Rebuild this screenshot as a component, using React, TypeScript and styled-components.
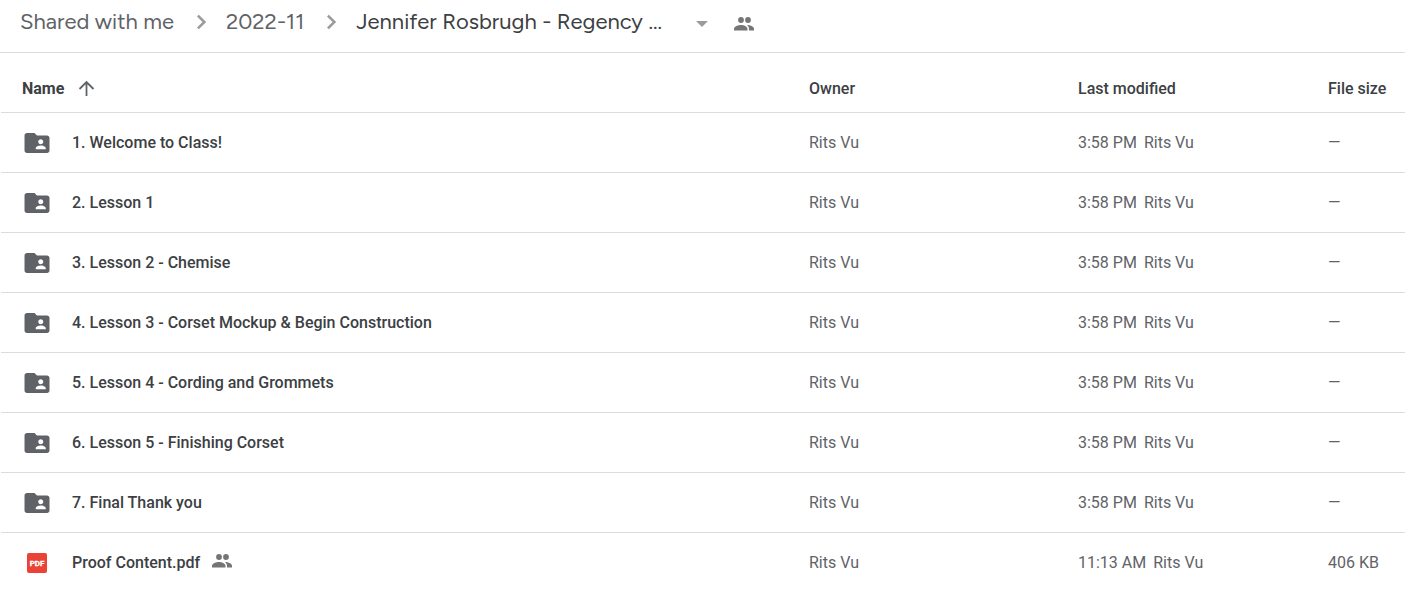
import React from "react";
import styled, { createGlobalStyle } from "styled-components";

const GlobalStyle = createGlobalStyle`
  *, *::before, *::after { box-sizing: border-box; }
  body {
    margin: 0;
    background: #fff;
    color: #3c4043;
    font-family: Roboto, "Liberation Sans", sans-serif;
    font-size: 16px;
    line-height: 20px;
  }
`;

const Breadcrumbs = styled.nav`
  display: flex;
  align-items: center;
  height: 53px;
  padding: 0 20px 8px;
  border-bottom: 1px solid #dadce0;
  font-family: Figtree, Inter, "Liberation Sans", sans-serif;
  font-size: 22px;
  line-height: 28px;
  white-space: nowrap;
`;

const Crumb = styled.a<{ $current?: boolean }>`
  color: ${(p) => (p.$current ? "#3c4043" : "#5f6368")};
  font-weight: 400;
  text-decoration: none;
`;

const Separator = styled.svg`
  flex: none;
  width: 52px;
  height: 28px;
  fill: #999b9e;
`;

const IconButton = styled.button<{ $width: number; $gap: number }>`
  display: flex;
  justify-content: center;
  width: ${(p) => p.$width}px;
  margin-left: ${(p) => p.$gap}px;
  padding: 4px 0 0;
  border: 0;
  background: none;
  color: #757575;
`;

const FileTable = styled.table`
  width: calc(100% - 1px);
  margin-left: 1px;
  border-collapse: separate;
  border-spacing: 0;
  table-layout: fixed;
`;

const Column = styled.col<{ $width?: number }>`
  width: ${(p) => (p.$width ? `${p.$width}px` : "auto")};
`;

const HeaderCell = styled.th`
  height: 60px;
  padding: 12px 0 0;
  border-bottom: 1px solid #dadce0;
  font-weight: 500;
  text-align: left;
  white-space: nowrap;

  &:first-child { padding-left: 21px; }
`;

const SortButton = styled.button`
  display: flex;
  align-items: center;
  gap: 12px;
  padding: 0;
  border: 0;
  background: none;
  color: inherit;
  font: inherit;
  font-weight: 700;
`;

const Row = styled.tr`
  height: 60px;

  & > * { border-bottom: 1px solid #dadce0; }
  &:last-child > * { border-bottom-color: transparent; }
`;

const Cell = styled.td`
  padding: 0;
  color: #5f6368;
  white-space: nowrap;
`;

const NameCell = styled.th`
  padding: 1px 0 0 21px;
  font-weight: 500;
  text-align: left;
`;

const FileName = styled.span`
  display: flex;
  align-items: center;
`;

const IconSlot = styled.span`
  display: flex;
  justify-content: center;
  width: 30px;
  margin-right: 20px;
`;

const SharedMark = styled.span`
  display: flex;
  margin-left: 12px;
  padding-bottom: 4px;
  color: #757575;
`;

const Editor = styled.span`
  margin-left: 7px;
`;

const FolderIcon = () => (
  <svg width="30" height="30" viewBox="0 0 24 24" fill="#5f6368" aria-hidden="true">
    <path d="M20 6h-8l-2-2H4c-1.1 0-1.99.9-1.99 2L2 18c0 1.1.9 2 2 2h16c1.1 0 2-.9 2-2V8c0-1.1-.9-2-2-2zm-5 3c1.1 0 2 .9 2 2s-.9 2-2 2-2-.9-2-2 .9-2 2-2zm4 8h-8v-1c0-1.33 2.67-2 4-2s4 .67 4 2v1z" />
  </svg>
);

const PdfIcon = () => (
  <svg width="20" height="20" viewBox="0 0 20 20" aria-hidden="true">
    <rect width="20" height="20" rx="2" fill="#ea4335" />
    <text x="10" y="13" fill="#fff" stroke="#fff" strokeWidth="0.3" fontSize="8" fontWeight="700" textAnchor="middle">PDF</text>
  </svg>
);

const PeopleIcon = () => (
  <svg width="20" height="14" viewBox="0 0 20 14" fill="currentColor" aria-hidden="true">
    <circle cx="7" cy="3" r="2.900" />
    <circle cx="14" cy="3" r="2.900" />
    <path d="M0 13.500v-1.500c0-2.600 4.500-4 7-4s6.500 1.400 6.500 4v1.500zM13 8c3.500.1 7 1.500 7 4v1.500h-5v-1.500c0-1.700-.8-3-2-4z" />
  </svg>
);

const SortIcon = () => (
  <svg width="20" height="20" viewBox="0 0 20 20" fill="none" stroke="#5f6368" strokeWidth="1.800" aria-hidden="true">
    <path d="M10.500 17V3.500M3.500 10l7-7 7 7" />
  </svg>
);

const Chevron = () => (
  <Separator viewBox="0 0 52 28" aria-hidden="true">
    <path d="M23 8.500 24.800 6.700 32.200 14l-7.400 7.300L23 19.500l5.500-5.500z" />
  </Separator>
);

type FileItem = { name: string; time: string; size: string; pdf?: boolean };

const folders = [
  "1. Welcome to Class!",
  "2. Lesson 1",
  "3. Lesson 2 - Chemise",
  "4. Lesson 3 - Corset Mockup & Begin Construction",
  "5. Lesson 4 - Cording and Grommets",
  "6. Lesson 5 - Finishing Corset",
  "7. Final Thank you",
];

const files: FileItem[] = [
  ...folders.map((name) => ({ name, time: "3:58 PM", size: "—" })),
  { name: "Proof Content.pdf", time: "11:13 AM", size: "406 KB", pdf: true },
];

const FileRow = ({ file }: { file: FileItem }) => (
  <Row>
    <NameCell scope="row">
      <FileName>
        <IconSlot>{file.pdf ? <PdfIcon /> : <FolderIcon />}</IconSlot>
        {file.name}
        {file.pdf && <SharedMark><PeopleIcon /></SharedMark>}
      </FileName>
    </NameCell>
    <Cell>Rits Vu</Cell>
    <Cell>{file.time}<Editor>Rits Vu</Editor></Cell>
    <Cell>{file.size}</Cell>
  </Row>
);

export default function App() {
  return (
    <>
      <GlobalStyle />
      <Breadcrumbs aria-label="Folder path">
        <Crumb href="#shared">Shared with me</Crumb>
        <Chevron />
        <Crumb href="#2022-11">2022-11</Crumb>
        <Chevron />
        <Crumb href="#current" $current aria-current="page">Jennifer Rosbrugh - Regency ...</Crumb>
        <IconButton type="button" $width={16} $gap={32} aria-label="Folder actions">
          <svg width="12" height="6" viewBox="0 0 12 6" fill="#999b9e" aria-hidden="true">
            <path d="M0 0h12L6 6z" />
          </svg>
        </IconButton>
        <IconButton type="button" $width={20} $gap={24} aria-label="Manage access">
          <PeopleIcon />
        </IconButton>
      </Breadcrumbs>
      <FileTable>
        <colgroup>
          <Column />
          <Column $width={269} />
          <Column $width={250} />
          <Column $width={77} />
        </colgroup>
        <thead>
          <tr>
            <HeaderCell scope="col" aria-sort="ascending">
              <SortButton type="button">Name<SortIcon /></SortButton>
            </HeaderCell>
            <HeaderCell scope="col">Owner</HeaderCell>
            <HeaderCell scope="col">Last modified</HeaderCell>
            <HeaderCell scope="col">File size</HeaderCell>
          </tr>
        </thead>
        <tbody>
          {files.map((file) => <FileRow key={file.name} file={file} />)}
        </tbody>
      </FileTable>
    </>
  );
}
